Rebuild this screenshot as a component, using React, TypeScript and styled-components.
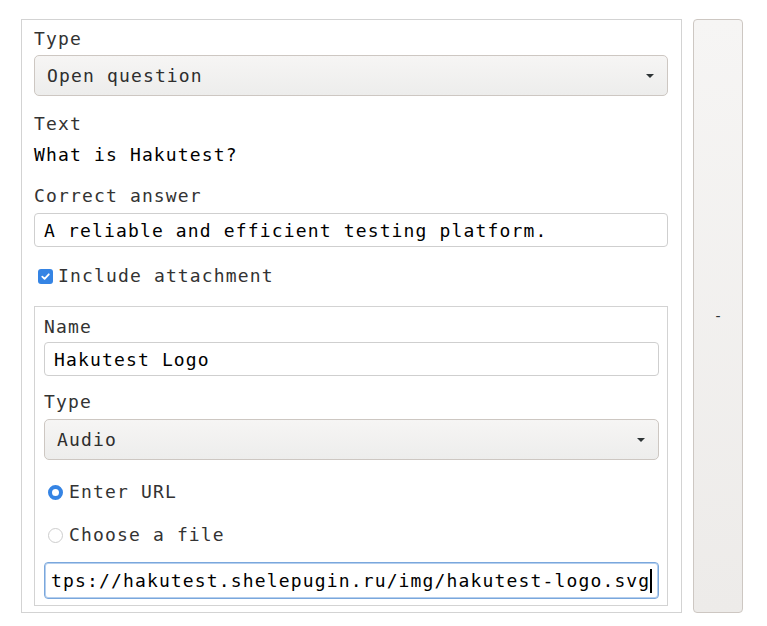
import React from 'react';
import styled, { createGlobalStyle } from 'styled-components';

const GlobalStyle = createGlobalStyle`
    body {
        margin: 0;
        background: #ffffff;
        font-family: "DejaVu Sans Mono", "Liberation Mono", monospace;
    }
`;

const Page = styled.div`
    display: flex;
    gap: 11px;
    padding: 19px 0 0 21px;
    align-items: stretch;
`;

const Panel = styled.div`
    width: 661px;
    box-sizing: border-box;
    border: 1px solid #d3d3d3;
    padding: 8px 13px 6px 12px;
    display: flex;
    flex-direction: column;
`;

const RemoveButton = styled.button`
    width: 50px;
    box-sizing: border-box;
    border: 1px solid #cdc7c2;
    border-radius: 4px;
    background: linear-gradient(#f6f5f4, #edebe9);
    font-family: "DejaVu Sans", sans-serif;
    font-size: 14px;
    color: #2e3436;
    padding: 0;
`;

const Field = styled.div<{ $gap?: number }>`
    display: flex;
    flex-direction: column;
    margin-top: ${(p) => p.$gap ?? 0}px;
`;

const Label = styled.div`
    font-size: 18px;
    letter-spacing: 1.15px;
    line-height: 22px;
    color: #333333;
`;

const Value = styled.div`
    font-size: 18px;
    letter-spacing: 1.15px;
    line-height: 22px;
    color: #000000;
    margin-top: 9px;
`;

const Select = styled.div<{ $gap: number }>`
    margin-top: ${(p) => p.$gap}px;
    height: 41px;
    box-sizing: border-box;
    border: 1px solid #cdc7c2;
    border-radius: 5px;
    background: linear-gradient(#f6f5f4, #ededec);
    display: flex;
    align-items: center;
    justify-content: space-between;
    padding: 0 13px 0 12px;
    font-size: 18px;
    letter-spacing: 1.15px;
    color: #2e2e2e;
`;

const Arrow = styled.span`
    width: 0;
    height: 0;
    border-left: 4px solid transparent;
    border-right: 4px solid transparent;
    border-top: 4px solid #2e3436;
`;

const TextBox = styled.div<{ $gap: number; $focused?: boolean }>`
    margin-top: ${(p) => p.$gap}px;
    height: ${(p) => (p.$focused ? 37 : 34)}px;
    box-sizing: border-box;
    border: 1px solid ${(p) => (p.$focused ? '#7aa7dc' : '#cfcfcf')};
    box-shadow: ${(p) => (p.$focused ? 'inset 0 0 0 1px #b5cfee' : 'none')};
    border-radius: 4px;
    background: #ffffff;
    display: flex;
    align-items: center;
    white-space: nowrap;
    padding: 0 8px 0 ${(p) => (p.$focused ? 6 : 9)}px;
    font-size: 18px;
    letter-spacing: 1.15px;
    color: #000000;
`;

const Caret = styled.span`
    display: inline-block;
    width: 2px;
    height: 24px;
    background: #000;
    flex-shrink: 0;
`;

const CheckRow = styled.label<{ $gap: number }>`
    display: flex;
    align-items: center;
    margin-top: ${(p) => p.$gap}px;
    font-size: 18px;
    letter-spacing: 1.15px;
    line-height: 22px;
    color: #333333;
`;

const CheckBox = styled.span`
    width: 15px;
    height: 15px;
    margin: 0 5px 0 4px;
    border-radius: 3px;
    background: #3584e4;
    display: flex;
    align-items: center;
    justify-content: center;
`;

const Radio = styled.span<{ $checked?: boolean }>`
    width: 15px;
    height: 15px;
    box-sizing: border-box;
    margin: 0 6px 0 4px;
    border-radius: 50%;
    border: ${(p) => (p.$checked ? '4px solid #3584e4' : '1px solid #cdcdcd')};
    background: #ffffff;
`;

const Attachment = styled.div`
    margin-top: 19px;
    border: 1px solid #d3d3d3;
    padding: 9px 8px 6px 9px;
    display: flex;
    flex-direction: column;
`;

export default function App() {
    return (
        <>
            <GlobalStyle />
            <Page>
                <Panel>
                    <Field>
                        <Label>Type</Label>
                        <Select $gap={5}>
                            <span>Open question</span>
                            <Arrow />
                        </Select>
                    </Field>
                    <Field $gap={17}>
                        <Label>Text</Label>
                        <Value>What is Hakutest?</Value>
                    </Field>
                    <Field $gap={19}>
                        <Label>Correct answer</Label>
                        <TextBox $gap={6}>A reliable and efficient testing platform.</TextBox>
                    </Field>
                    <CheckRow $gap={18}>
                        <CheckBox>
                            <svg width="11" height="11" viewBox="0 0 12 12">
                                <path d="M2.5 6.2 L5 8.6 L9.6 3.6" fill="none" stroke="#fff" strokeWidth="2" strokeLinecap="round" strokeLinejoin="round" />
                            </svg>
                        </CheckBox>
                        Include attachment
                    </CheckRow>
                    <Attachment>
                        <Field>
                            <Label>Name</Label>
                            <TextBox $gap={4}>Hakutest Logo</TextBox>
                        </Field>
                        <Field $gap={15}>
                            <Label>Type</Label>
                            <Select $gap={6}>
                                <span>Audio</span>
                                <Arrow />
                            </Select>
                        </Field>
                        <CheckRow $gap={21}>
                            <Radio $checked />
                            Enter URL
                        </CheckRow>
                        <CheckRow $gap={21}>
                            <Radio />
                            Choose a file
                        </CheckRow>
                        <TextBox $gap={16} $focused>
                            <span>tps://hakutest.shelepugin.ru/img/hakutest-logo.svg</span>
                            <Caret />
                        </TextBox>
                    </Attachment>
                </Panel>
                <RemoveButton>-</RemoveButton>
            </Page>
        </>
    );
}
